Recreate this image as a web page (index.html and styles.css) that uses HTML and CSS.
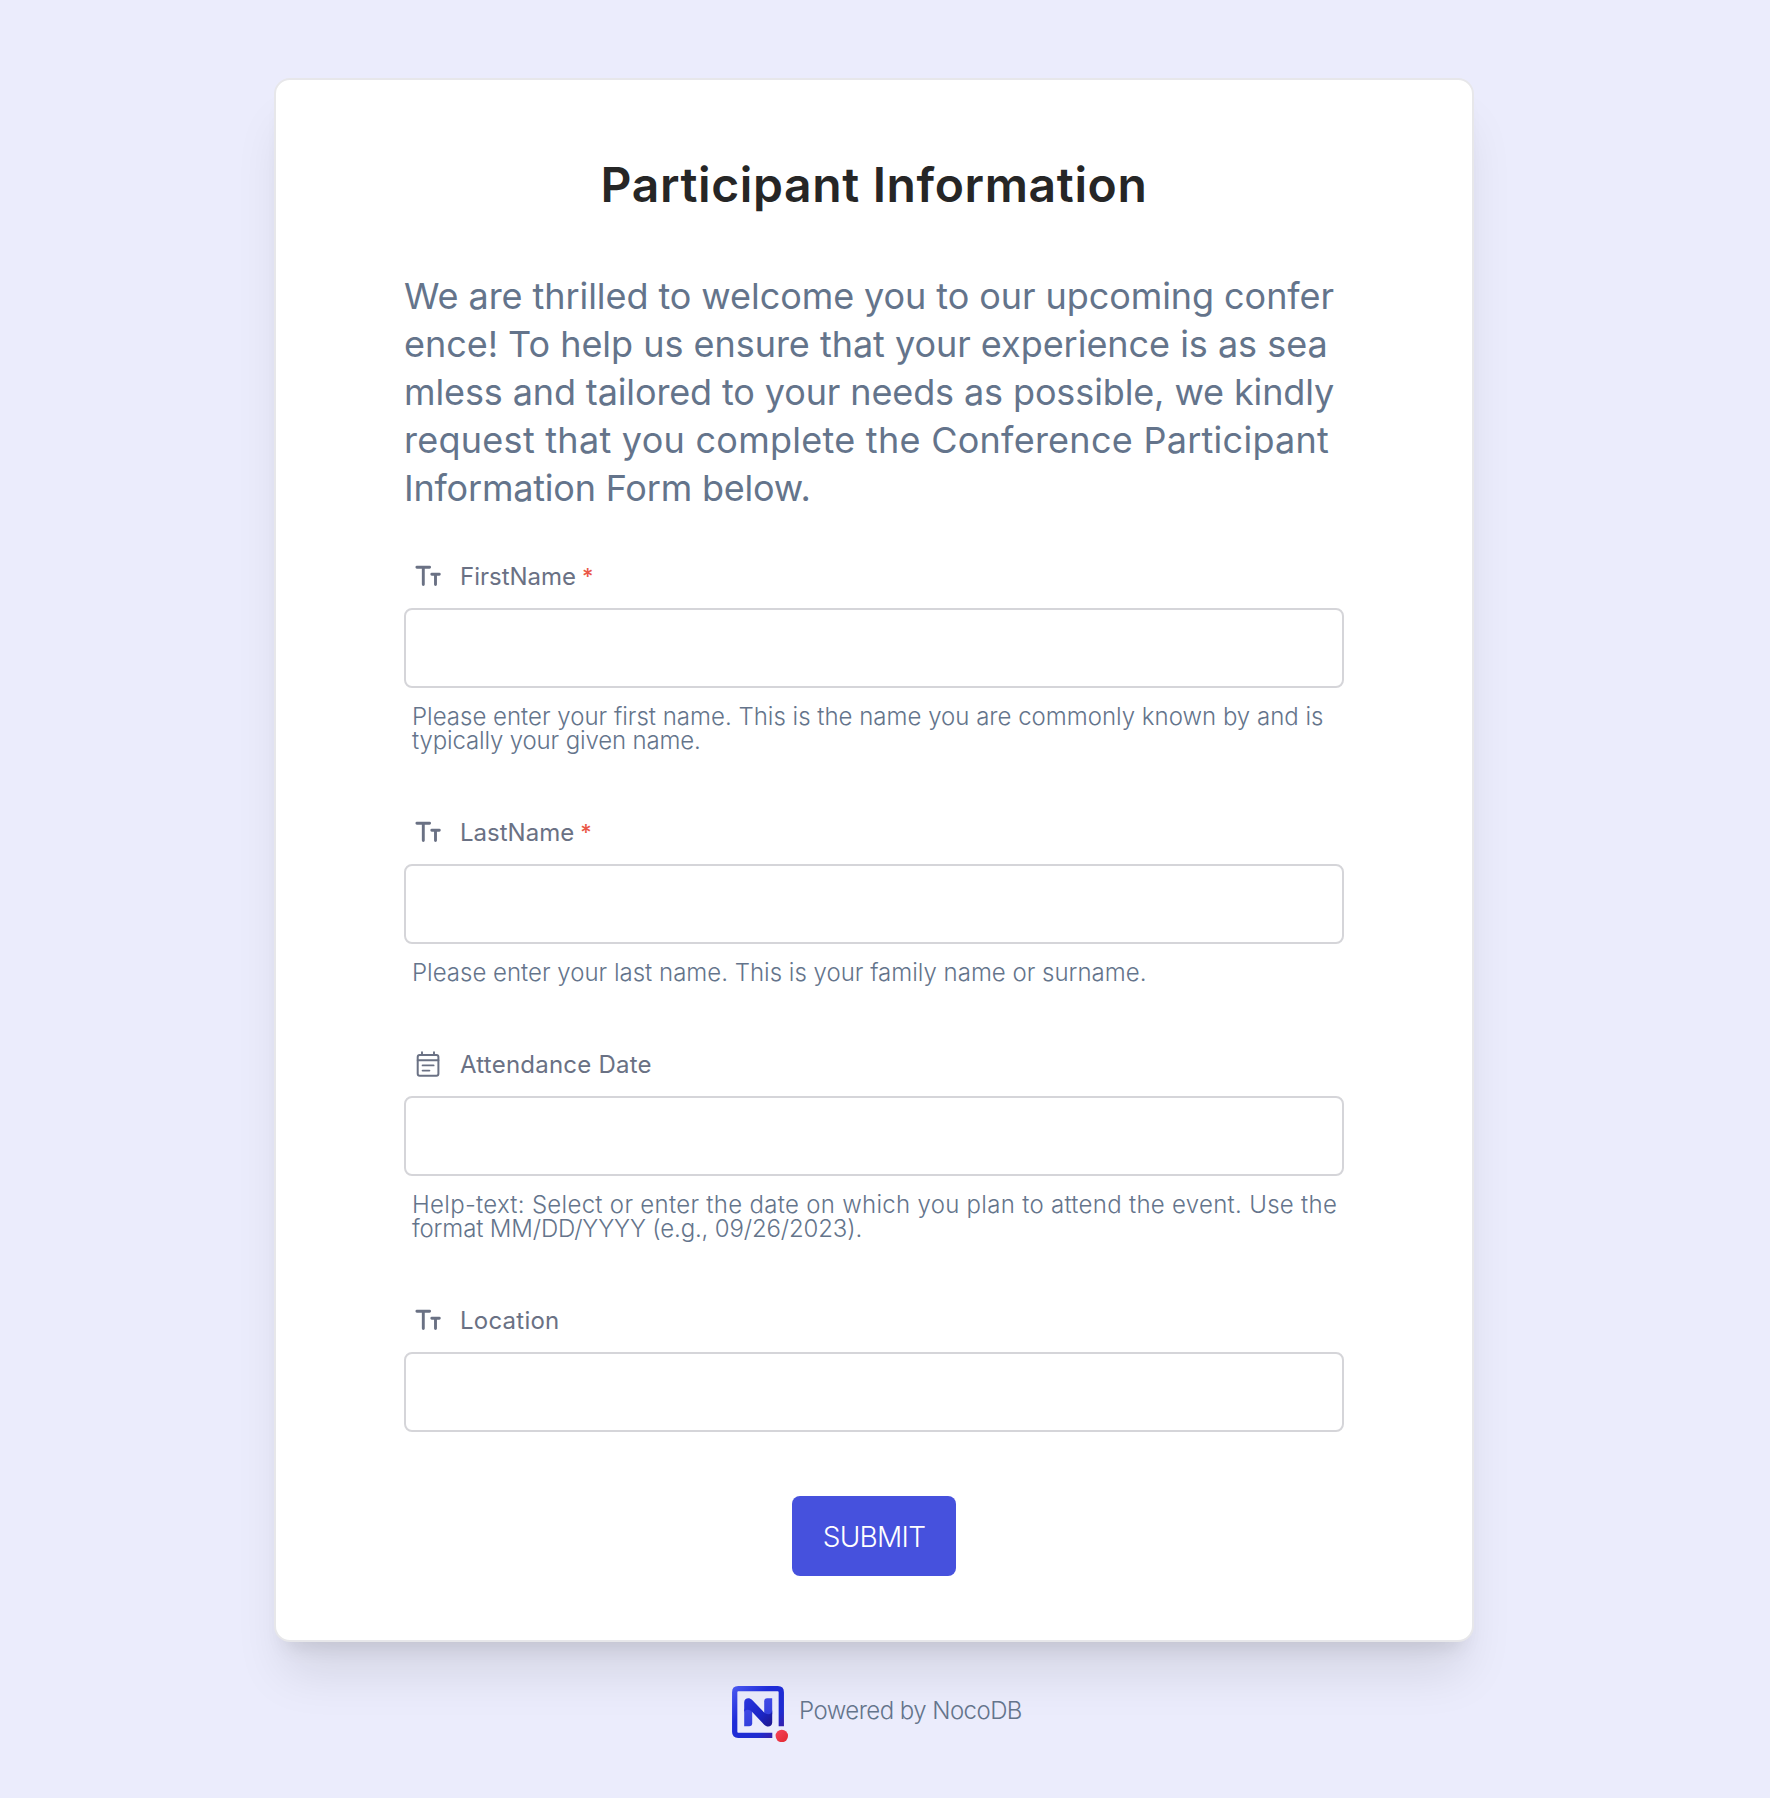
FILE: index.html
```
<!DOCTYPE html>
<html lang="en">
<head>
<meta charset="utf-8">
<title>Participant Information</title>
<link rel="stylesheet" href="styles.css">
</head>
<body>
<svg class="defs" width="0" height="0" aria-hidden="true">
  <symbol id="icon-text" viewBox="0 0 32 32">
    <path d="M4.9 7.2H17.6M11.3 7.2V24.6M19.8 14.2H27.3M23.5 14.2V24.6" fill="none" stroke="currentColor" stroke-width="2.9" stroke-linecap="round"/>
  </symbol>
  <symbol id="icon-date" viewBox="0 0 32 32">
    <rect x="5.7" y="7" width="20.7" height="20.7" rx="2" fill="none" stroke="currentColor" stroke-width="2"/>
    <path d="M10 4.2V7M22 4.2V7M5.7 12.3H26.4M10.6 17.4H21.6M10.6 22.6H17.4" fill="none" stroke="currentColor" stroke-width="1.9" stroke-linecap="round"/>
  </symbol>
</svg>
<main class="page">
  <form class="card">
    <h1 class="title">Participant Information</h1>
    <p class="intro">
      <span class="line">We are thrilled to welcome you to our upcoming confer</span>
      <span class="line line-sea">ence! To help us ensure that your experience is as sea</span>
      <span class="line line-tight">mless and tailored to your needs as possible, we kindly</span>
      <span class="line line-wide">request that you complete the Conference Participant</span>
      <span class="line line-end">Information Form below.</span>
    </p>
    <div class="fields">
      <div class="field">
        <label class="label" for="first"><svg class="icon"><use href="#icon-text"/></svg><span class="name">FirstName</span><span class="required">*</span></label>
        <input class="input" id="first" type="text">
        <p class="help"><span class="line">Please enter your first name. This is the name you are commonly known by and is</span><span class="line line-tight">typically your given name.</span></p>
      </div>
      <div class="field">
        <label class="label" for="last"><svg class="icon"><use href="#icon-text"/></svg><span class="name">LastName</span><span class="required">*</span></label>
        <input class="input" id="last" type="text">
        <p class="help">Please enter your last name. This is your family name or surname.</p>
      </div>
      <div class="field">
        <label class="label label-wide" for="date"><svg class="icon"><use href="#icon-date"/></svg><span class="name">Attendance Date</span></label>
        <input class="input" id="date" type="text">
        <p class="help"><span class="line line-wide">Help-text: Select or enter the date on which you plan to attend the event. Use the</span><span class="line line-tight">format MM/DD/YYYY (e.g., 09/26/2023).</span></p>
      </div>
      <div class="field">
        <label class="label label-wide" for="location"><svg class="icon"><use href="#icon-text"/></svg><span class="name">Location</span></label>
        <input class="input" id="location" type="text">
      </div>
    </div>
    <button class="submit" type="button">SUBMIT</button>
  </form>
  <footer class="footer">
    <svg class="logo" viewBox="0 0 56 56">
      <defs>
        <linearGradient id="frame" x1="0" y1="0" x2="1" y2="1">
          <stop offset="0" stop-color="#4654ee"/><stop offset=".35" stop-color="#1f2cd8"/><stop offset=".75" stop-color="#1f2cd0"/><stop offset="1" stop-color="#401a9c"/>
        </linearGradient>
        <linearGradient id="stem" x1="0" y1="0" x2="0" y2="1">
          <stop offset="0" stop-color="#3f49e6"/><stop offset="1" stop-color="#3340dc"/>
        </linearGradient>
        <linearGradient id="bar" x1="0" y1="0" x2="1" y2="1">
          <stop offset="0" stop-color="#2a35df"/><stop offset=".6" stop-color="#1b25c4"/><stop offset="1" stop-color="#20168c"/>
        </linearGradient>
        <linearGradient id="dot" x1="0" y1="0" x2="1" y2="1">
          <stop offset="0" stop-color="#f5455c"/><stop offset="1" stop-color="#e2282f"/>
        </linearGradient>
      </defs>
      <path d="M49.3 40.3V6.2Q49.3 2.7 45.8 2.7H6.2Q2.7 2.7 2.7 6.2V45.8Q2.7 49.3 6.2 49.3H40.3" fill="none" stroke="url(#frame)" stroke-width="5.3"/>
      <path d="M12.2 40.3V24Q12.2 21 20.2 24.5V37.3Q20.2 40.3 17.2 40.3Z" fill="url(#stem)"/>
      <path d="M40.2 12.3V28Q40.2 32 32.2 28V15.3Q32.2 12.3 35.2 12.3Z" fill="url(#stem)"/>
      <path d="M12.2 27V16.3C12.2 12 17.3 11 20.2 14L32.2 26.5C35.5 29.5 40.2 28.5 40.2 24V36.5C40.2 40.8 35.2 42 32.2 38.8L20.2 26C17 22.6 12.2 23.4 12.2 27Z" fill="url(#bar)"/>
      <circle cx="49.8" cy="50" r="6.2" fill="url(#dot)"/>
    </svg>
    <span class="powered">Powered by NocoDB</span>
  </footer>
</main>
</body>
</html>
```
FILE: styles.css
```
* { box-sizing: border-box; }
body {
  margin: 0;
  background: #ebecfc;
  font-family: Inter, "Liberation Sans", sans-serif;
}
.defs { display: block; }
.page {
  display: flex;
  flex-direction: column;
  align-items: center;
  min-height: 1798px;
  padding: 78px 22px 0 0;
}
.card {
  display: flex;
  flex-direction: column;
  width: 1200px;
  height: 1564px;
  padding: 77px 128px 64px;
  border: 2px solid #e7e7ea;
  border-radius: 16px;
  background: #fff;
  box-shadow: 0 40px 50px -10px rgba(0, 0, 0, .1), 0 16px 20px -12px rgba(0, 0, 0, .1);
}
.title {
  margin: 0 0 59px;
  color: #262626;
  font-size: 48px;
  font-weight: 600;
  line-height: 56px;
  letter-spacing: .64px;
  text-align: center;
}
.line { display: block; white-space: nowrap; }
.intro {
  margin: 0 0 48px;
  color: #64748b;
  font-size: 36px;
  line-height: 48px;
  letter-spacing: -.07px;
}
.intro .line-sea { letter-spacing: -.03px; }
.intro .line-tight { letter-spacing: -.12px; }
.intro .line-wide { letter-spacing: .27px; }
.intro .line-end { letter-spacing: -.2px; }
.fields {
  display: flex;
  flex-direction: column;
  gap: 64px;
}
.field { display: flex; flex-direction: column; gap: 16px; }
.label {
  display: flex;
  align-items: center;
  height: 32px;
  padding-left: 8px;
  color: #6a7184;
  font-size: 24px;
  line-height: 32px;
}
.name { padding-top: 2px; }
.label-wide { letter-spacing: .23px; }
.icon { width: 32px; height: 32px; margin-right: 16px; }
.required { margin-left: 6px; color: #ea5747; font-size: 22px; font-weight: 500; }
.input {
  width: 100%;
  height: 80px;
  padding: 0 16px;
  border: 2px solid #d5d5d9;
  border-radius: 8px;
  background: #fff;
  font: inherit;
}
.help {
  margin: 1px 0 -1px;
  padding-left: 8px;
  color: #64748b;
  font-size: 24px;
  font-weight: 300;
  line-height: 24px;
}
.help .line-wide { letter-spacing: .29px; }
.help .line-tight { letter-spacing: -.15px; }
.submit {
  align-self: center;
  width: 164px;
  height: 80px;
  margin-top: 64px;
  padding: 2px 0 0;
  border: 0;
  border-radius: 8px;
  background: #4651dd;
  color: #fff;
  font-family: inherit;
  font-size: 28px;
  font-weight: 300;
  letter-spacing: -.7px;
}
.footer {
  display: flex;
  align-items: center;
  gap: 11px;
  margin-top: 44px;
  padding-left: 6px;
}
.logo { width: 56px; height: 56px; }
.powered {
  margin-top: -6px;
  color: #64748b;
  font-size: 24px;
  font-weight: 300;
  line-height: 32px;
  letter-spacing: -.55px;
}
```
